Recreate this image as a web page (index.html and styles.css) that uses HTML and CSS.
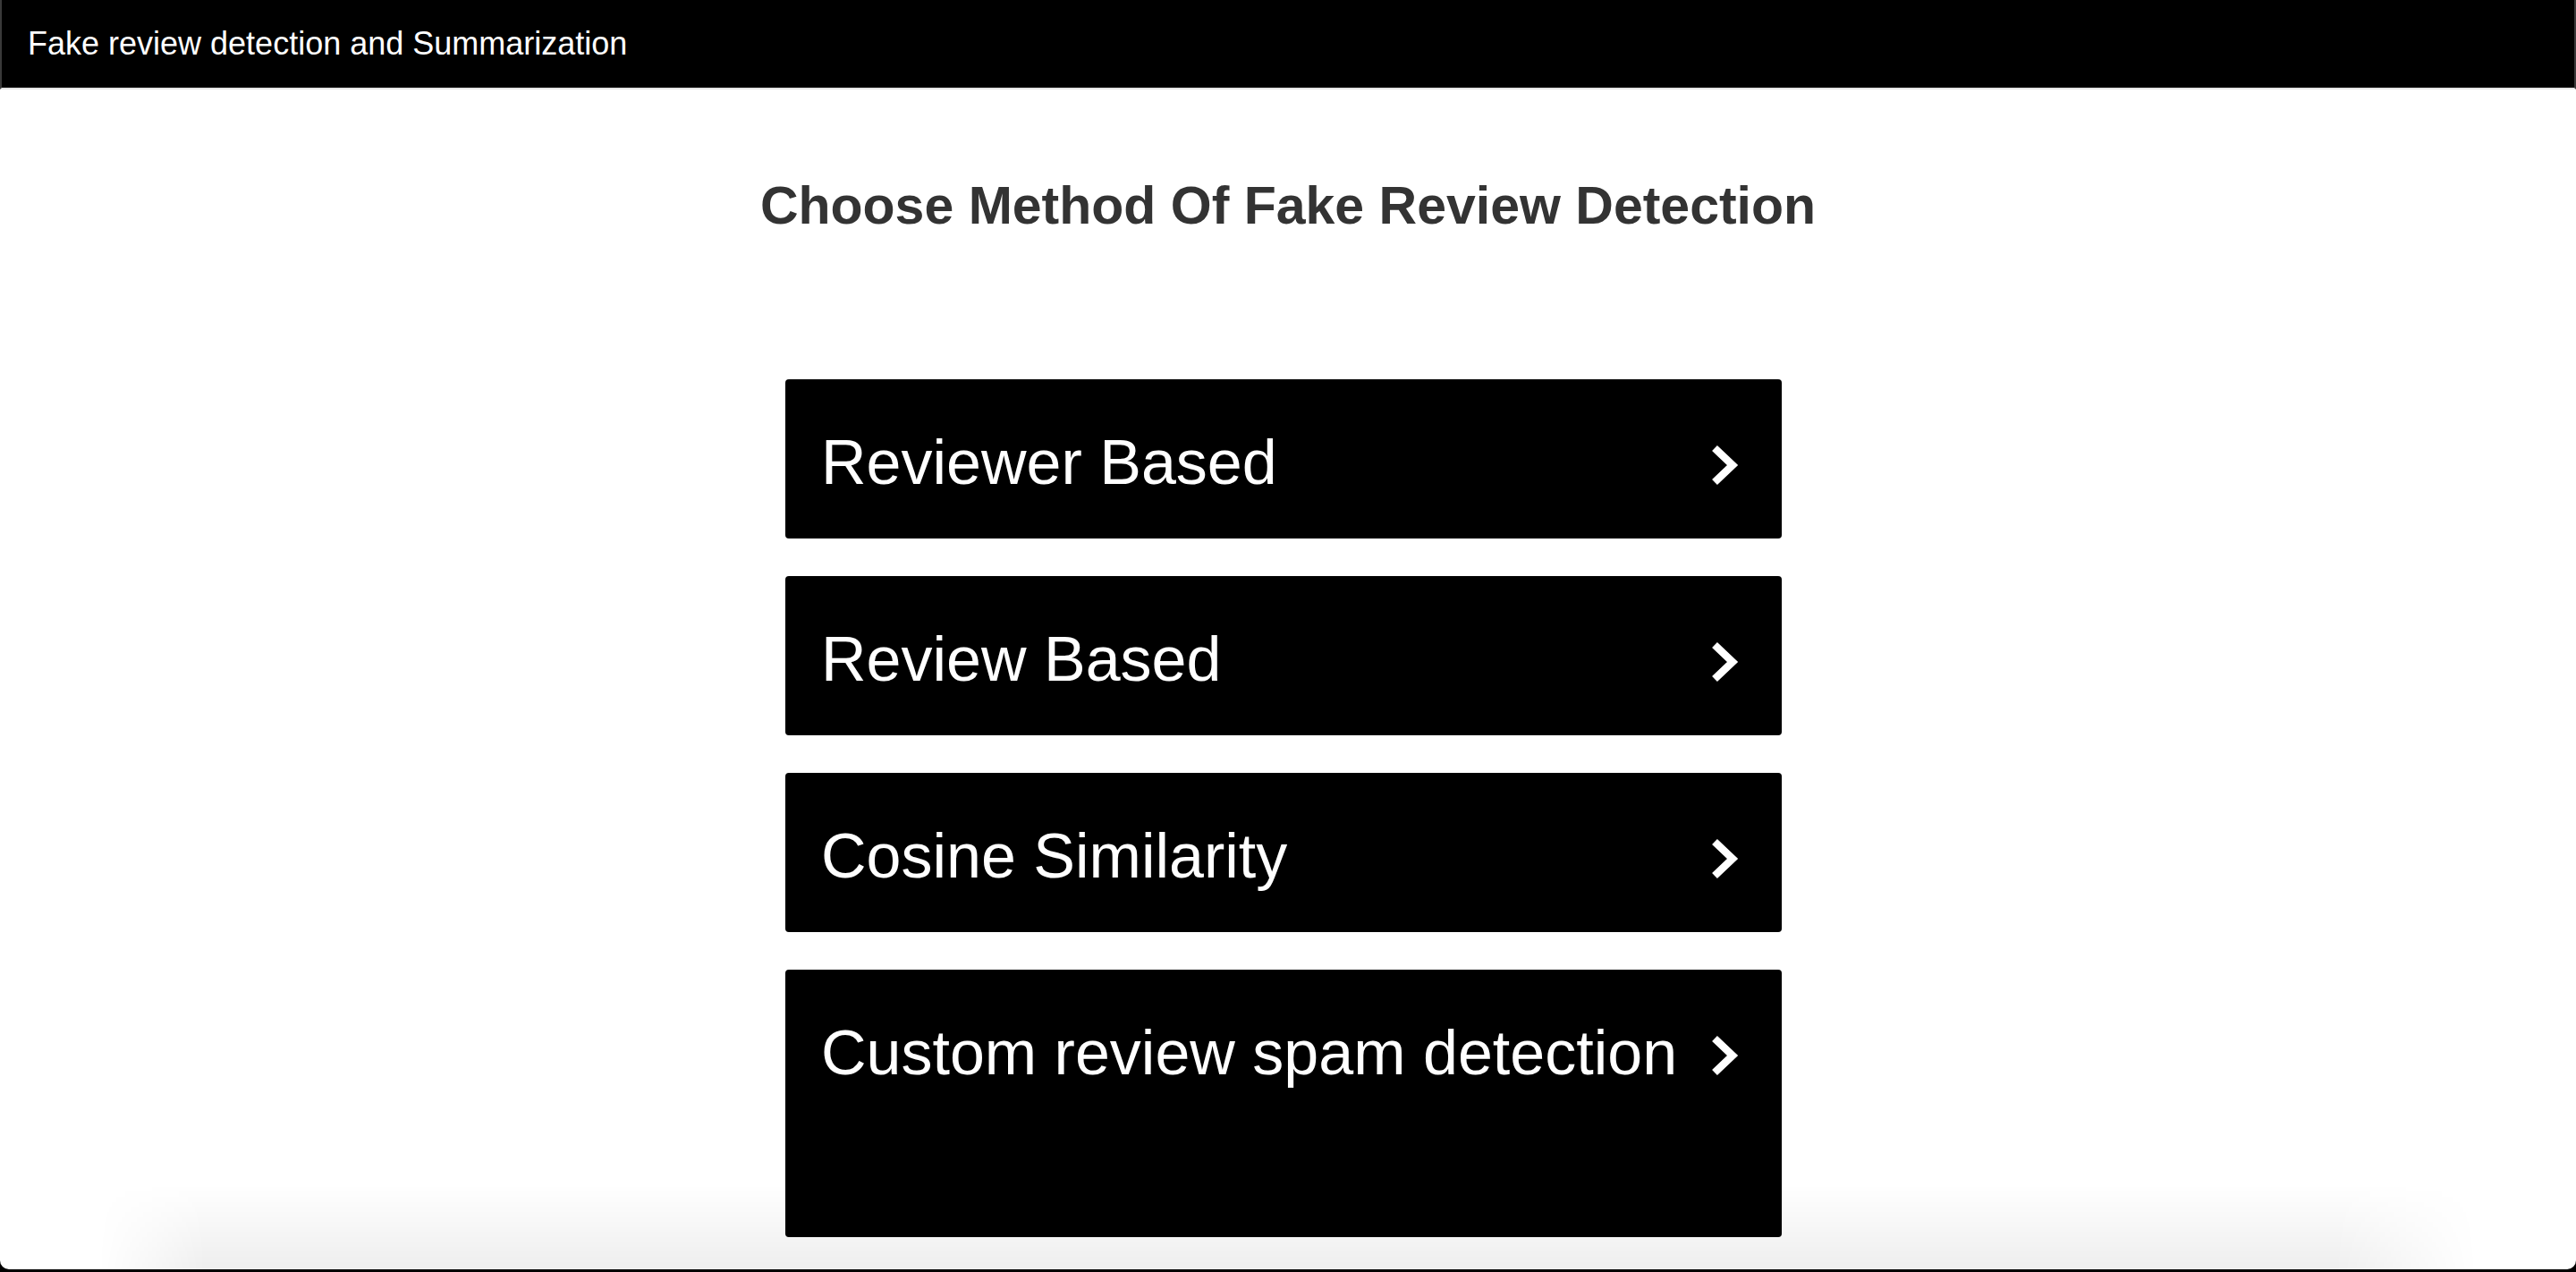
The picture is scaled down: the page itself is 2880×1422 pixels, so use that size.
FILE: index.html
```html
<!DOCTYPE html>
<html lang="en">
<head>
<meta charset="utf-8">
<title>Fake review detection and Summarization</title>
<link rel="stylesheet" href="styles.css">
</head>
<body>
<div class="window">
  <header class="topbar">Fake review detection and Summarization</header>
  <main class="content">
    <h2 class="title">Choose Method Of Fake Review Detection</h2>
    <div class="list">
      <a class="method" href="#">
        <span class="label">Reviewer Based</span>
        <svg class="chev" viewBox="0 0 36 48" width="36" height="48"><polyline points="7,5 27,24 7,43"/></svg>
      </a>
      <a class="method" href="#">
        <span class="label">Review Based</span>
        <svg class="chev" viewBox="0 0 36 48" width="36" height="48"><polyline points="7,5 27,24 7,43"/></svg>
      </a>
      <a class="method" href="#">
        <span class="label">Cosine Similarity</span>
        <svg class="chev" viewBox="0 0 36 48" width="36" height="48"><polyline points="7,5 27,24 7,43"/></svg>
      </a>
      <a class="method method-tall" href="#">
        <span class="label">Custom review spam detection</span>
        <svg class="chev" viewBox="0 0 36 48" width="36" height="48"><polyline points="7,5 27,24 7,43"/></svg>
      </a>
    </div>
  </main>
  <div class="bottom-shade"></div>
</div>
</body>
</html>
```

FILE: styles.css
```css
html, body {
  margin: 0;
  padding: 0;
  background: #000;
}

body {
  font-family: "Liberation Sans", Arial, Helvetica, sans-serif;
  overflow: hidden;
}

.window {
  position: relative;
  height: 1419px;
  background: #fff;
  border-radius: 0 0 10px 10px;
  overflow: hidden;
}

.topbar {
  height: 100px;
  box-sizing: border-box;
  display: flex;
  align-items: center;
  padding-left: 29px;
  background: #000;
  color: #fff;
  font-size: 36px;
  border-left: 2px solid #3a3a3a;
  border-right: 2px solid #3a3a3a;
  border-bottom: 2px solid #e4e4e4;
}

.content {
  display: flex;
  flex-direction: column;
  align-items: center;
}

.title {
  margin: 96px 0 0 0;
  font-size: 59px;
  font-weight: bold;
  line-height: 68px;
  color: #333;
}

.list {
  width: 1114px;
  padding-right: 10px;
  margin-top: 160px;
  display: flex;
  flex-direction: column;
  gap: 42px;
}

.method {
  display: flex;
  justify-content: space-between;
  align-items: flex-start;
  height: 178px;
  box-sizing: border-box;
  padding: 53px 46px 0 40px;
  background: #000;
  color: #fff;
  text-decoration: none;
  border-radius: 4px;
}

.method-tall {
  height: 299px;
}

.label {
  font-size: 70px;
  line-height: 80px;
  white-space: nowrap;
}

.chev {
  flex: none;
  margin-top: 19px;
}

.chev polyline {
  fill: none;
  stroke: #fff;
  stroke-width: 8.5;
  stroke-linecap: butt;
  stroke-linejoin: miter;
}

.bottom-shade {
  position: absolute;
  left: 110px;
  right: 110px;
  bottom: 0;
  height: 95px;
  background: linear-gradient(to bottom, rgba(0, 0, 0, 0), rgba(0, 0, 0, 0.065));
  -webkit-mask-image: linear-gradient(to right, transparent 0, #000 120px, #000 calc(100% - 160px), transparent 100%);
  mask-image: linear-gradient(to right, transparent 0, #000 120px, #000 calc(100% - 160px), transparent 100%);
  pointer-events: none;
}
```
